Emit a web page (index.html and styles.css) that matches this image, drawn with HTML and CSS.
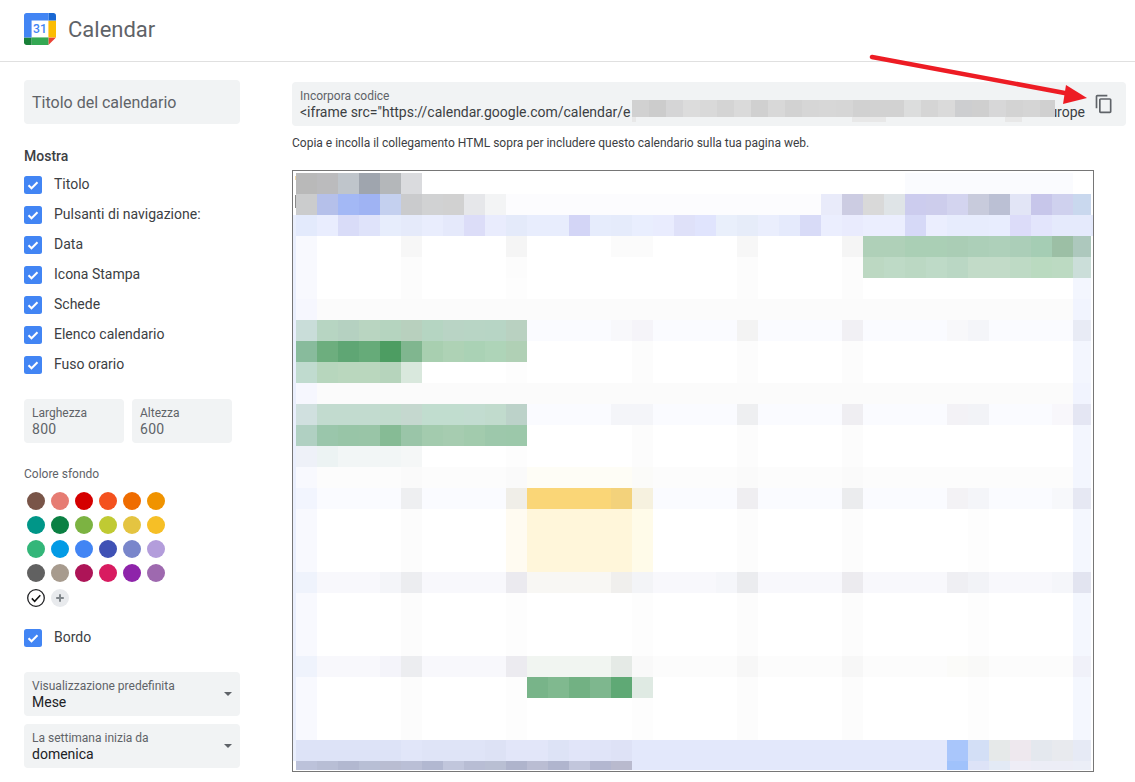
FILE: index.html
```html
<!DOCTYPE html>
<html lang="it">
<head>
<meta charset="utf-8">
<title>Calendar</title>
<link rel="stylesheet" href="styles.css">
</head>
<body>
<header class="topbar">
  <svg class="logo" viewBox="0 0 200 200" aria-hidden="true">
    <polygon fill="#fff" points="152.6,47.4 47.4,47.4 47.4,152.6 152.6,152.6"/>
    <polygon fill="#EA4335" points="152.6,200 200,152.6 152.6,152.6"/>
    <polygon fill="#FBBC04" points="200,47.4 152.6,47.4 152.6,152.6 200,152.6"/>
    <path fill="#34A853" d="M152.6,152.6H47.4V200h105.2V152.6z"/>
    <path fill="#188038" d="M0,152.6v31.6C0,192.9,7.1,200,15.8,200h31.6v-47.4H0z"/>
    <path fill="#1967D2" d="M200,47.4V15.8C200,7.1,192.9,0,184.2,0h-31.6v47.4H200z"/>
    <path fill="#4285F4" d="M152.6,0H15.8C7.1,0,0,7.1,0,15.8v136.8h47.4V47.4h105.2V0z"/>
    <text class="logo-num" x="100" y="126" text-anchor="middle">31</text>
  </svg>
  <span class="brand">Calendar</span>
</header>

<svg class="arrow" viewBox="860 50 240 60" aria-hidden="true">
  <path class="arrow-line" d="M872 57L1070 94"/>
  <polygon class="arrow-head" points="1087,98 1066,85 1063,104"/>
</svg>

<div class="layout">
  <aside class="sidebar">
    <div class="title-field">Titolo del calendario</div>

    <div class="section-title">Mostra</div>
    <ul class="checks">
      <li class="check"><svg class="box" viewBox="0 0 18 18"><rect width="18" height="18" rx="2.5"/><path d="M4.5 9.3l3 3 6-6"/></svg>Titolo</li>
      <li class="check"><svg class="box" viewBox="0 0 18 18"><rect width="18" height="18" rx="2.5"/><path d="M4.5 9.3l3 3 6-6"/></svg>Pulsanti di navigazione:</li>
      <li class="check"><svg class="box" viewBox="0 0 18 18"><rect width="18" height="18" rx="2.5"/><path d="M4.5 9.3l3 3 6-6"/></svg>Data</li>
      <li class="check"><svg class="box" viewBox="0 0 18 18"><rect width="18" height="18" rx="2.5"/><path d="M4.5 9.3l3 3 6-6"/></svg>Icona Stampa</li>
      <li class="check"><svg class="box" viewBox="0 0 18 18"><rect width="18" height="18" rx="2.5"/><path d="M4.5 9.3l3 3 6-6"/></svg>Schede</li>
      <li class="check"><svg class="box" viewBox="0 0 18 18"><rect width="18" height="18" rx="2.5"/><path d="M4.5 9.3l3 3 6-6"/></svg>Elenco calendario</li>
      <li class="check"><svg class="box" viewBox="0 0 18 18"><rect width="18" height="18" rx="2.5"/><path d="M4.5 9.3l3 3 6-6"/></svg>Fuso orario</li>
    </ul>

    <div class="size-row">
      <div class="field size"><div class="field-label">Larghezza</div><div class="field-value muted">800</div></div>
      <div class="field size"><div class="field-label">Altezza</div><div class="field-value muted">600</div></div>
    </div>

    <div class="color-title">Colore sfondo</div>
    <div class="swatches">
      <span class="sw c-1"></span><span class="sw c-2"></span><span class="sw c-3"></span><span class="sw c-4"></span><span class="sw c-5"></span><span class="sw c-6"></span>
      <span class="sw c-7"></span><span class="sw c-8"></span><span class="sw c-9"></span><span class="sw c-10"></span><span class="sw c-11"></span><span class="sw c-12"></span>
      <span class="sw c-13"></span><span class="sw c-14"></span><span class="sw c-15"></span><span class="sw c-16"></span><span class="sw c-17"></span><span class="sw c-18"></span>
      <span class="sw c-19"></span><span class="sw c-20"></span><span class="sw c-21"></span><span class="sw c-22"></span><span class="sw c-23"></span><span class="sw c-24"></span>
      <svg class="sw-icon" viewBox="0 0 18 18"><circle class="sel-ring" cx="9" cy="9" r="8.3"/><path class="sel-check" d="M4.8 9.4l2.9 2.9 5.6-6"/></svg>
      <svg class="sw-icon plus" viewBox="0 0 18 18"><circle class="plus-bg" cx="9" cy="9" r="9"/><path class="plus-mark" d="M9 5.2v7.6M5.2 9h7.6"/></svg>
    </div>

    <div class="check border-check"><svg class="box" viewBox="0 0 18 18"><rect width="18" height="18" rx="2.5"/><path d="M4.5 9.3l3 3 6-6"/></svg>Bordo</div>

    <div class="field select first-select">
      <div class="field-label">Visualizzazione predefinita</div>
      <div class="field-value dark">Mese</div>
      <span class="caret"></span>
    </div>
    <div class="field select">
      <div class="field-label">La settimana inizia da</div>
      <div class="field-value dark">domenica</div>
      <span class="caret"></span>
    </div>
  </aside>

  <main class="main">
    <div class="field embed">
      <div class="embed-text">
        <div class="field-label">Incorpora codice</div>
        <div class="field-value embed-value"><span>&lt;iframe src="https://calendar.google.com/calendar/e</span><span>urope</span></div>
      </div>
      <svg class="copy" viewBox="0 0 24 24" aria-hidden="true"><path d="M16 1H4c-1.1 0-2 .9-2 2v14h2V3h12V1zm3 4H8c-1.1 0-2 .9-2 2v14c0 1.1.9 2 2 2h11c1.1 0 2-.9 2-2V7c0-1.1-.9-2-2-2zm0 16H8V7h11v14z"/></svg>
      <svg class="blur" viewBox="632 100 423 22" aria-hidden="true">
        <g class="blur-top">
          <rect x="632" fill="#d1d1d1"/><rect x="649" fill="#cccccc"/><rect x="666" fill="#d5d5d6"/><rect x="683" fill="#dcdcdc"/><rect x="700" fill="#d9d9d9"/>
          <rect x="717" fill="#d4d4d4"/><rect x="734" fill="#dadada"/><rect x="751" fill="#d0d0d0"/><rect x="768" fill="#d8d8d8"/><rect x="785" fill="#d2d2d2"/>
          <rect x="802" fill="#d6d6d6"/><rect x="819" fill="#d7d7d7"/><rect x="836" fill="#d6d6d6"/><rect x="853" fill="#d1d1d1"/><rect x="870" fill="#d2d2d2"/>
          <rect x="887" fill="#d2d2d2"/><rect x="904" fill="#dcdddd"/><rect x="921" fill="#d5d5d5"/><rect x="938" fill="#dadada"/><rect x="955" fill="#cdced0"/>
          <rect x="972" fill="#cfcfcf"/><rect x="989" fill="#d7d7d8"/><rect x="1006" fill="#d3d3d3"/><rect x="1023" fill="#d5d5d5"/><rect x="1040" fill="#d0d0d0"/>
        </g>
        <rect class="blur-tail" x="632" y="117" width="4" height="5"/>
        <rect class="blur-tail" x="852" y="117" width="34" height="5"/>
        <rect class="blur-tail" x="1005" y="117" width="17" height="5"/>
      </svg>
    </div>

    <p class="hint">Copia e incolla il collegamento HTML sopra per includere questo calendario sulla tua pagina web.</p>

    <div class="frame">
      <svg class="mosaic" viewBox="293 171 800 600" aria-hidden="true">
        <rect x="293" y="215" width="3" height="546" fill="#eaeffd"/>
        <rect x="295" y="176" width="1" height="4" fill="#f5d9a6"/>
        <rect x="295" y="195" width="1" height="13" fill="#8a8a8a"/>
        <!-- r0 -->
        <g transform="translate(0,173)">
          <rect x="905" width="168" fill="#fafbfe"/>
          <rect x="296" fill="#b9b9b9"/><rect x="317" fill="#bbbbbd"/><rect x="338" fill="#bfc5cb"/><rect x="359" fill="#9fa5ae"/><rect x="380" fill="#b4b7ba"/><rect x="401" fill="#dadbde"/>
        </g>
        <!-- r1 -->
        <g transform="translate(0,194)">
          <rect x="506" width="315" fill="#fcfcfe"/>
          <rect x="296" fill="#cbcccd"/><rect x="317" fill="#b5c0ea"/><rect x="338" fill="#a3b8f5"/><rect x="359" fill="#9fb3f3"/><rect x="380" fill="#c4d0ef"/><rect x="401" fill="#cacbcd"/><rect x="422" fill="#d1d2d3"/><rect x="443" fill="#d1d1d1"/><rect x="464" fill="#e6e7ea"/><rect x="485" fill="#f3f4f5"/>
          <rect x="821" fill="#e9ebfa"/><rect x="842" fill="#cccce2"/><rect x="863" fill="#d9d9d9"/><rect x="884" fill="#dfe4e7"/><rect x="905" fill="#ccccee"/><rect x="926" fill="#cdcdec"/><rect x="947" fill="#d3d4ef"/><rect x="968" fill="#c8cbdc"/><rect x="989" fill="#bbc0d4"/><rect x="1010" fill="#e2e5f6"/><rect x="1031" fill="#c7c6ea"/><rect x="1052" fill="#cfd1ee"/><rect x="1073" width="18" fill="#c9d8ee"/>
        </g>
        <!-- r2 -->
        <g transform="translate(0,215)">
          <rect x="296" fill="#e3eafc"/><rect x="317" fill="#e9edfe"/><rect x="338" fill="#d9dcf8"/><rect x="359" fill="#dfe3fa"/><rect x="380" fill="#e7edfc"/><rect x="401" fill="#e5eafa"/><rect x="422" fill="#e9edfd"/><rect x="443" fill="#e5e9fb"/><rect x="464" fill="#dcddf8"/><rect x="485" fill="#e9ecfd"/><rect x="506" fill="#e4eafa"/><rect x="527" width="42" fill="#e8edfd"/><rect x="569" fill="#d3d5f6"/><rect x="590" fill="#e6ecfc"/><rect x="611" fill="#e5ebfb"/><rect x="632" fill="#e9eefe"/>
          <rect x="653" fill="#e9ecfe"/><rect x="674" fill="#dfe1f9"/><rect x="695" fill="#e0e4fd"/><rect x="716" fill="#e9effb"/><rect x="737" fill="#e6ecf9"/><rect x="758" fill="#eaeefd"/><rect x="779" fill="#e5eafc"/><rect x="800" fill="#d8dbf7"/><rect x="821" fill="#ebeefe"/><rect x="842" fill="#e9ebfd"/><rect x="863" width="42" fill="#ebeefe"/><rect x="905" fill="#d6d9f7"/><rect x="926" fill="#ebeefe"/><rect x="947" width="42" fill="#e7ecfd"/><rect x="989" fill="#e8edfe"/><rect x="1010" fill="#dcdcf9"/><rect x="1031" fill="#e3e5fc"/><rect x="1052" width="41" fill="#e5eafc"/>
        </g>
        <!-- r3 -->
        <g transform="translate(0,236)">
          <rect x="296" fill="#f8f9fe"/><rect x="401" fill="#f7f7f7"/><rect x="506" fill="#f5f5f5"/><rect x="611" width="42" fill="#fbfbfb"/><rect x="737" fill="#f7f7f7"/><rect x="842" fill="#f5f5f5"/>
          <rect x="863" width="42" fill="#afd0b8"/><rect x="905" width="42" fill="#aacfb5"/><rect x="947" fill="#aacdb5"/><rect x="968" fill="#accfb8"/><rect x="989" fill="#aed0ba"/><rect x="1010" fill="#abceb8"/><rect x="1031" fill="#a5cdb4"/><rect x="1052" fill="#9cbfa5"/><rect x="1073" width="18" fill="#adc8bd"/>
        </g>
        <!-- r4 -->
        <g transform="translate(0,257)">
          <rect x="296" fill="#f8f9fe"/><rect x="401" fill="#fcfcfc"/><rect x="506" fill="#fcfcfc"/><rect x="737" fill="#fcfcfc"/><rect x="842" fill="#fcfcfc"/>
          <rect x="863" fill="#bcd8c2"/><rect x="884" fill="#bedac6"/><rect x="905" fill="#bbd8c3"/><rect x="926" fill="#bedac7"/><rect x="947" fill="#bad7c4"/><rect x="968" width="42" fill="#c2dbc8"/><rect x="1010" fill="#bedac5"/><rect x="1031" fill="#badac0"/><rect x="1052" fill="#bcdac2"/><rect x="1073" width="18" fill="#cbded9"/>
        </g>
        <!-- r5 -->
        <g transform="translate(0,278)">
          <rect x="296" fill="#f8f9fe"/><rect x="401" fill="#fcfcfc"/><rect x="506" fill="#fdfdfd"/><rect x="737" fill="#fcfcfc"/><rect x="842" fill="#fcfcfc"/><rect x="1073" width="18" fill="#f3f6fe"/>
        </g>
        <!-- r6 -->
        <g transform="translate(0,299)">
          <rect x="317" width="756" fill="#fbfbfb"/><rect x="296" fill="#f6f7fe"/><rect x="1073" width="18" fill="#f1f4fe"/>
        </g>
        <!-- r7 -->
        <g transform="translate(0,320)">
          <rect x="527" width="546" fill="#fafbff"/>
          <rect x="296" fill="#c9ddd9"/><rect x="317" fill="#b7d5c2"/><rect x="338" fill="#b5d1c1"/><rect x="359" fill="#b9d5c1"/><rect x="380" fill="#b5d4bf"/><rect x="401" fill="#b8d0be"/><rect x="422" fill="#b5d5c2"/><rect x="443" fill="#b9d4c5"/><rect x="464" fill="#b8d5c5"/><rect x="485" fill="#b7d5c5"/><rect x="506" fill="#b9d1c1"/>
          <rect x="611" fill="#f8f8fb"/><rect x="632" fill="#f5f4f9"/><rect x="737" fill="#f3f3f3"/><rect x="842" fill="#f1f0f4"/><rect x="947" fill="#f8f8fa"/><rect x="968" fill="#f4f5f9"/><rect x="1073" width="18" fill="#e8ebf5"/>
        </g>
        <!-- r8 -->
        <g transform="translate(0,341)">
          <rect x="296" fill="#88bb9c"/><rect x="317" fill="#6dae7e"/><rect x="338" fill="#5fa674"/><rect x="359" fill="#66ab79"/><rect x="380" fill="#4d9d62"/><rect x="401" fill="#80b68f"/><rect x="422" fill="#a8cfb0"/><rect x="443" fill="#aed2b5"/><rect x="464" fill="#aad2b5"/><rect x="485" fill="#aed4b8"/><rect x="506" fill="#b0d0b5"/>
          <rect x="632" fill="#fcfcfc"/><rect x="737" fill="#fcfcfc"/><rect x="842" fill="#fcfcfc"/><rect x="1073" width="18" fill="#f3f6fe"/>
        </g>
        <!-- r9 -->
        <g transform="translate(0,362)">
          <rect x="296" fill="#c0dbcf"/><rect x="317" fill="#b7d6bd"/><rect x="338" width="42" fill="#bad7be"/><rect x="380" fill="#b6d4bc"/><rect x="401" fill="#d9e8dd"/>
          <rect x="506" fill="#fdfdfd"/><rect x="632" fill="#fcfcfc"/><rect x="737" fill="#fcfcfc"/><rect x="842" fill="#fcfcfc"/><rect x="1073" width="18" fill="#f3f6fe"/>
        </g>
        <!-- r10 -->
        <g transform="translate(0,383)">
          <rect x="317" width="756" fill="#fbfbfb"/><rect x="296" fill="#f6f7fe"/><rect x="1073" width="18" fill="#f1f4fe"/>
        </g>
        <!-- r11 -->
        <g transform="translate(0,404)">
          <rect x="527" width="546" fill="#fafbff"/>
          <rect x="296" fill="#d0e0df"/><rect x="317" width="63" fill="#c2dbcf"/><rect x="380" fill="#c1dbcd"/><rect x="401" fill="#c5d8cf"/><rect x="422" width="42" fill="#c1ddcf"/><rect x="464" fill="#c2dcd0"/><rect x="485" fill="#c1dbcd"/><rect x="506" fill="#bcd2c9"/>
          <rect x="611" width="42" fill="#f4f5f9"/><rect x="737" fill="#eeeff1"/><rect x="842" fill="#efeef2"/><rect x="947" fill="#f3f2f6"/><rect x="968" fill="#f2f3f7"/><rect x="1052" fill="#f8f7fb"/><rect x="1073" width="18" fill="#e4e6f3"/>
        </g>
        <!-- r12 -->
        <g transform="translate(0,425)">
          <rect x="296" fill="#b0d0c2"/><rect x="317" fill="#9ac6ab"/><rect x="338" fill="#98c5a7"/><rect x="359" fill="#99c5a7"/><rect x="380" fill="#86bb95"/><rect x="401" fill="#9ac5a8"/><rect x="422" fill="#a3cbae"/><rect x="443" fill="#a6ccb0"/><rect x="464" fill="#a2cbad"/><rect x="485" fill="#9dc8ab"/><rect x="506" fill="#9cc8aa"/>
          <rect x="632" fill="#fcfcfc"/><rect x="737" fill="#fcfcfc"/><rect x="842" fill="#fcfcfc"/><rect x="1073" width="18" fill="#f3f6fe"/>
        </g>
        <!-- r13 -->
        <g transform="translate(0,446)">
          <rect x="296" fill="#eef1f8"/><rect x="317" fill="#ecf3f3"/><rect x="338" width="63" fill="#f2f6f6"/><rect x="401" fill="#f5f7f7"/>
          <rect x="506" fill="#fdfdfd"/><rect x="632" fill="#fcfcfc"/><rect x="737" fill="#fcfcfc"/><rect x="842" fill="#fcfcfc"/><rect x="1073" width="18" fill="#f3f6fe"/>
        </g>
        <!-- r14 -->
        <g transform="translate(0,467)">
          <rect x="317" width="756" fill="#fcfcfc"/><rect x="527" width="105" fill="#fefdf6"/><rect x="296" fill="#f8f9fe"/><rect x="401" fill="#fafafa"/><rect x="506" fill="#fafafa"/><rect x="632" fill="#fbfbf9"/><rect x="737" fill="#fafafa"/><rect x="842" fill="#fafafa"/><rect x="1073" width="18" fill="#f3f6fe"/>
        </g>
        <!-- r15 -->
        <g transform="translate(0,488)">
          <rect x="296" width="777" fill="#fafbff"/><rect x="296" fill="#f2f5fe"/><rect x="401" fill="#eeeff1"/><rect x="506" fill="#f0eee8"/><rect x="527" width="84" fill="#fad677"/><rect x="611" fill="#f3d27b"/><rect x="632" fill="#f6f1df"/><rect x="737" fill="#efeef1"/><rect x="842" fill="#ebecee"/><rect x="947" fill="#f3f2f5"/><rect x="968" fill="#f4f5f9"/><rect x="1052" fill="#f7f8fb"/><rect x="1073" width="18" fill="#e6e8f3"/>
        </g>
        <!-- r16-18 -->
        <g transform="translate(0,509)">
          <rect x="296" height="63" fill="#f8f9fe"/><rect x="401" height="63" fill="#fcfcfc"/><rect x="506" height="63" fill="#fffbf1"/><rect x="527" width="105" height="63" fill="#fff6da"/><rect x="632" height="63" fill="#fffbe9"/><rect x="737" height="63" fill="#fcfcfc"/><rect x="842" height="63" fill="#fcfcfc"/><rect x="968" height="63" fill="#fdfdfd"/><rect x="1073" width="18" height="63" fill="#f4f7fe"/>
        </g>
        <!-- r19 -->
        <g transform="translate(0,572)">
          <rect x="296" width="777" fill="#f8f8fc"/><rect x="296" fill="#eff3fc"/><rect x="380" fill="#f4f5f9"/><rect x="401" fill="#ecedf0"/><rect x="506" fill="#ebeaef"/><rect x="527" width="84" fill="#f8f7f4"/><rect x="611" fill="#f0efed"/><rect x="632" fill="#f3f4f7"/><rect x="716" fill="#f5f6fa"/><rect x="737" fill="#ebecef"/><rect x="842" fill="#ecebef"/><rect x="947" fill="#efeff3"/><rect x="968" fill="#f2f3f7"/><rect x="1052" fill="#f5f6fa"/><rect x="1073" width="18" fill="#e2e4f0"/>
        </g>
        <!-- r20-22 -->
        <g transform="translate(0,593)">
          <rect x="296" height="63" fill="#f8f9fe"/><rect x="401" height="63" fill="#fcfcfc"/><rect x="506" height="63" fill="#fdfdfd"/><rect x="632" height="63" fill="#fdfdfd"/><rect x="737" height="63" fill="#fcfcfc"/><rect x="842" height="63" fill="#fcfcfc"/><rect x="968" height="63" fill="#fdfdfd"/><rect x="1073" width="18" height="63" fill="#f4f7fe"/>
        </g>
        <!-- r23 -->
        <g transform="translate(0,656)">
          <rect x="296" width="231" fill="#f8f8fc"/><rect x="632" width="441" fill="#fcfcfc"/><rect x="296" fill="#eff3fc"/><rect x="380" fill="#f4f4fa"/><rect x="401" fill="#ecedf0"/><rect x="506" fill="#ecebf0"/><rect x="527" width="84" fill="#f1f5f1"/><rect x="611" fill="#e5eae6"/><rect x="632" fill="#f9f9f9"/><rect x="737" fill="#f7f7f7"/><rect x="842" fill="#f7f7f7"/><rect x="947" fill="#fbfbf9"/><rect x="968" fill="#f9f9f8"/><rect x="1073" width="18" fill="#f0f1f9"/>
        </g>
        <!-- r24-26 -->
        <g transform="translate(0,677)">
          <rect x="296" height="63" fill="#f8f9fe"/><rect x="401" height="63" fill="#fcfcfc"/><rect x="506" height="63" fill="#fdfdfd"/><rect x="632" height="63" fill="#fdfdfd"/><rect x="737" height="63" fill="#fcfcfc"/><rect x="842" height="63" fill="#fcfcfc"/><rect x="968" height="63" fill="#fdfdfd"/><rect x="1073" width="18" height="63" fill="#f4f7fe"/>
          <rect x="527" fill="#78b489"/><rect x="548" fill="#80b98f"/><rect x="569" fill="#72b183"/><rect x="590" fill="#7eb78e"/><rect x="611" fill="#5fa975"/><rect x="632" fill="#dfeae3"/>
        </g>
        <!-- r27 -->
        <g transform="translate(0,740)">
          <rect x="296" width="795" fill="#e3e8fb"/><rect x="296" width="105" fill="#dde3f7"/><rect x="401" width="21" fill="#e1e6f9"/><rect x="422" width="63" fill="#dfe4f7"/><rect x="485" width="21" fill="#dde2f5"/><rect x="506" width="42" fill="#e2e6f9"/><rect x="548" fill="#dde3f6"/><rect x="569" fill="#e1e5f9"/><rect x="590" fill="#e0e4f8"/><rect x="611" fill="#dee2f6"/>
          <rect x="947" fill="#a9c6fb"/><rect x="968" fill="#d3dff6"/><rect x="989" fill="#e6e9e9"/><rect x="1010" fill="#eee8ee"/><rect x="1031" fill="#e4e8ee"/><rect x="1052" fill="#e8eaee"/><rect x="1073" width="18" fill="#e6eaf5"/>
        </g>
        <!-- r28 -->
        <g class="low" transform="translate(0,761)">
          <rect x="296" width="795" fill="#e3e8fb"/>
          <rect x="296" fill="#bcc2da"/><rect x="317" fill="#b8bed5"/><rect x="338" fill="#b2b8d0"/><rect x="359" fill="#b8bfd5"/><rect x="380" fill="#b9bdd2"/><rect x="401" fill="#babfd6"/><rect x="422" fill="#b2b8d1"/><rect x="443" fill="#c1c6dc"/><rect x="464" fill="#b8bdd4"/><rect x="485" fill="#b9bfd3"/><rect x="506" fill="#afb4cc"/><rect x="527" fill="#babdd3"/><rect x="548" fill="#b0b5ce"/><rect x="569" fill="#c2c6dc"/><rect x="590" fill="#b3b7d0"/><rect x="611" fill="#b9bace"/>
          <rect x="947" fill="#a0c2fb"/><rect x="968" fill="#dde3f7"/><rect x="989" fill="#e3eaf5"/><rect x="1010" fill="#eeedf6"/><rect x="1031" width="42" fill="#ecedf6"/><rect x="1073" width="18" fill="#ebeef7"/>
        </g>
      </svg>
    </div>
  </main>
</div>
</body>
</html>
```

FILE: styles.css
```css
* { box-sizing: border-box; }

html, body {
  margin: 0;
  height: 782px;
  overflow: hidden;
  background: #fff;
}

body {
  position: relative;
  font-family: Roboto, "Liberation Sans", sans-serif;
  color: #3c4043;
}

.topbar {
  height: 62px;
  border-bottom: 1px solid #e0e0e0;
  padding: 13px 0 0 24px;
  display: flex;
  align-items: flex-start;
  gap: 12px;
}

.logo { width: 32px; height: 32px; display: block; }
.logo-num { font: 500 76px Roboto, sans-serif; fill: #4285f4; }
.brand { font-size: 22px; line-height: 34px; color: #5f6368; }

.arrow {
  position: absolute;
  left: 860px;
  top: 50px;
  width: 240px;
  height: 60px;
  z-index: 2;
}
.arrow-line { fill: none; stroke: #ed1c24; stroke-width: 4.5; stroke-linecap: round; }
.arrow-head { fill: #ed1c24; }

.layout {
  display: flex;
  gap: 52px;
  padding: 0 9px 0 24px;
}

.sidebar { width: 216px; flex: none; padding-top: 18px; }
.main { flex: 1; min-width: 0; padding-top: 20px; }

.title-field {
  height: 44px;
  background: #f1f3f4;
  border-radius: 4px;
  padding: 1px 8px 0;
  font-size: 16px;
  line-height: 44px;
  color: #5f6368;
}

.section-title {
  margin-top: 22px;
  font-size: 14px;
  font-weight: 500;
  line-height: 20px;
  color: #3c4043;
}

.checks { list-style: none; margin: 4px 0 0; padding: 0; }

.check {
  display: flex;
  align-items: flex-start;
  gap: 12px;
  height: 30px;
  font-size: 14px;
  line-height: 28px;
  color: #3c4043;
}

.box { width: 18px; height: 18px; flex: none; margin-top: 6px; }
.box rect { fill: #4285f4; }
.box path { fill: none; stroke: #fff; stroke-width: 2; }

.field {
  position: relative;
  height: 44px;
  background: #f1f3f4;
  border-radius: 4px;
  padding: 8px 8px 0;
}
.field-label { font-size: 12px; line-height: 12px; color: #5f6368; }
.field-value { font-size: 14px; line-height: 20px; color: #3c4043; }
.muted { color: #5f6368; letter-spacing: .3px; }
.dark { color: #202124; }

.size-row { display: flex; gap: 8px; margin-top: 19px; }
.size { width: 100px; }

.color-title {
  margin-top: 23px;
  font-size: 12px;
  line-height: 16px;
  color: #5f6368;
}

.swatches {
  display: grid;
  grid-template-columns: repeat(6, 18px);
  grid-auto-rows: 18px;
  gap: 6px;
  margin: 10px 0 0 3px;
}
.sw { border-radius: 50%; }
.sw-icon { width: 18px; height: 18px; display: block; margin-top: 1px; }
.sel-ring { fill: #fff; stroke: #202124; stroke-width: 1.3; }
.sel-check { fill: none; stroke: #111; stroke-width: 1.5; }
.plus-bg { fill: #e8eaed; }
.plus-mark { fill: none; stroke: #80868b; stroke-width: 2; }

.c-1 { background: #795548; } .c-2 { background: #e67c73; } .c-3 { background: #d50000; }
.c-4 { background: #f4511e; } .c-5 { background: #ef6c00; } .c-6 { background: #f09300; }
.c-7 { background: #009688; } .c-8 { background: #0b8043; } .c-9 { background: #7cb342; }
.c-10 { background: #c0ca33; } .c-11 { background: #e4c441; } .c-12 { background: #f6bf26; }
.c-13 { background: #33b679; } .c-14 { background: #039be5; } .c-15 { background: #4285f4; }
.c-16 { background: #3f51b5; } .c-17 { background: #7986cb; } .c-18 { background: #b39ddb; }
.c-19 { background: #616161; } .c-20 { background: #a79b8e; } .c-21 { background: #ad1457; }
.c-22 { background: #d81b60; } .c-23 { background: #8e24aa; } .c-24 { background: #9e69af; }

.border-check { margin-top: 17px; }

.select { margin-top: 8px; }
.first-select { margin-top: 19px; }
.caret {
  position: absolute;
  right: 8px;
  top: 20px;
  border-left: 4px solid transparent;
  border-right: 4px solid transparent;
  border-top: 4px solid #5f6368;
}

.embed {
  display: flex;
  align-items: center;
  gap: 9px;
  padding: 0 12px 0 8px;
}
.embed-text { flex: 1; min-width: 0; align-self: flex-start; padding-top: 8px; }
.embed-value {
  display: flex;
  justify-content: space-between;
  white-space: nowrap;
}
.copy { width: 20px; height: 20px; flex: none; fill: #5f6368; }
.blur {
  position: absolute;
  left: 340px;
  top: 18px;
  width: 423px;
  height: 22px;
}
.blur-top rect { width: 17px; height: 17px; y: 100px; }
.blur-tail { fill: #e8e8e8; }

.hint {
  margin: 9px 0 19px;
  font-size: 12px;
  line-height: 16px;
  color: #3c4043;
}

.frame {
  width: 802px;
  height: 602px;
  border: 1px solid #767676;
}

.mosaic { display: block; width: 800px; height: 600px; }
.mosaic rect:not([width]) { width: 21px; }
.mosaic rect:not([height]) { height: 21px; }
.mosaic .low rect:not([height]) { height: 9px; }
```
